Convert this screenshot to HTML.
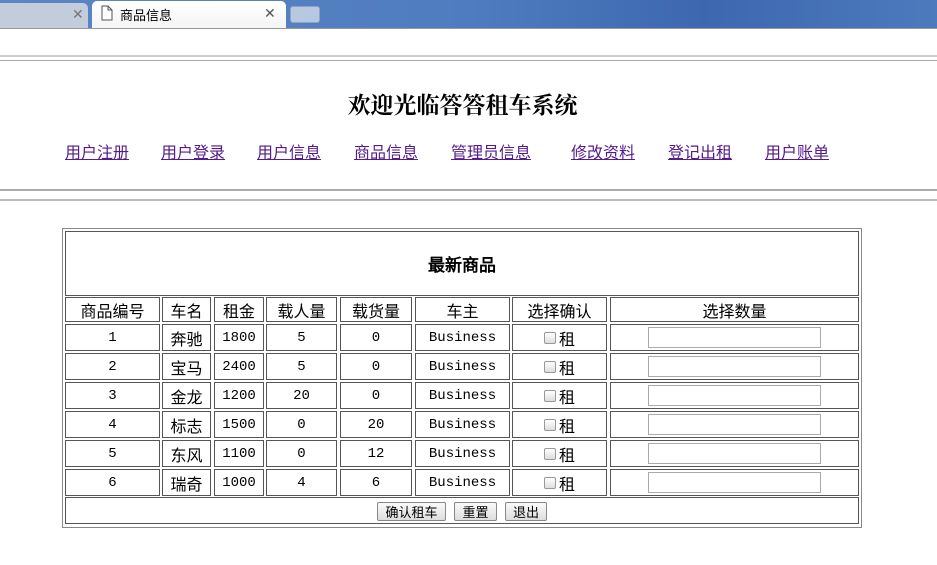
<!DOCTYPE html>
<html><head><meta charset="utf-8"><style>
*{margin:0;padding:0;box-sizing:border-box}
body{width:937px;height:565px;position:relative;background:#fff;overflow:hidden;font-family:"Liberation Serif","Noto Serif CJK SC","Noto Sans CJK SC",serif}
.abs{position:absolute}
.tabbar{left:0;top:0;width:937px;height:28px;background:linear-gradient(90deg,#5b86c4 0%,#4f7cc0 50%,#3d68b0 75%,#4d79bd 100%)}
.r{position:absolute;left:0;width:937px}
.cell{position:absolute;top:0;bottom:0;border:1px solid #555;display:flex;align-items:center;justify-content:center;font-size:16px;color:#000;font-family:"Liberation Serif","WenQuanYi Zen Hei",serif}
.c0{left:65px;width:95px}.c1{left:162px;width:49px}.c2{left:214px;width:50px}.c3{left:266px;width:71px}
.c4{left:340px;width:72px}.c5{left:415px;width:95px}.c6{left:512px;width:95px}.c7{left:610px;width:249px}
.num{font-family:"Liberation Mono","WenQuanYi Zen Hei",monospace;font-size:14px}
a{color:#551a8b;text-decoration:underline;font-size:16px;font-family:"WenQuanYi Zen Hei","Noto Sans CJK SC",sans-serif}
.cb{display:inline-block;width:12px;height:12px;border:1px solid #999;border-radius:2px;background:linear-gradient(#fff,#ddd);margin-right:3px}
.inp{position:absolute;left:648px;top:3px;width:173px;height:21px;border:1px solid #aaa;background:#fff}
.btn{position:absolute;top:502px;height:19px;border:1px solid #888;border-radius:2px;background:linear-gradient(#fafafa,#ddd);font-size:13px;display:flex;align-items:center;justify-content:center;font-family:"WenQuanYi Zen Hei",sans-serif}
</style></head><body>
<div class="abs tabbar"></div>
<div class="abs" style="left:0;top:3px;width:88px;height:25px;background:#c3ccda;border-radius:0 5px 0 0"></div>
<div class="abs" style="left:72px;top:6px;font-size:14px;color:#777;font-family:'Liberation Sans',sans-serif">✕</div>
<div class="abs" style="left:92px;top:1px;width:194px;height:28px;background:linear-gradient(#fff,#f4f4f4);border-radius:5px 5px 0 0"></div>
<svg class="abs" style="left:101px;top:5px" width="12" height="16"><path d="M1 1H7L11 5V15H1Z M7 1V5H11" fill="#fff" stroke="#555" stroke-width="1"/></svg>
<div class="abs" style="left:120px;top:5px;font-size:13px;font-family:'WenQuanYi Zen Hei',sans-serif">商品信息</div>
<div class="abs" style="left:264px;top:5px;font-size:14px;color:#555;font-family:'Liberation Sans',sans-serif">✕</div>
<div class="abs" style="left:290px;top:6px;width:30px;height:17px;background:#b8c8e0;border-radius:3px;border:1px solid #8ea3c6"></div>
<div class="abs" style="left:0;top:28px;width:937px;height:1px;background:#999"></div>
<div class="abs" style="left:0;top:55px;width:937px;height:2px;background:#ccc"></div>
<div class="abs" style="left:0;top:60px;width:937px;height:1px;background:#aaa"></div>

<div class="abs" style="left:0;top:87px;width:925px;text-align:center;font-size:23px;font-weight:bold">欢迎光临答答租车系统</div>
<a class="abs" style="left:65px;top:139px">用户注册</a>
<a class="abs" style="left:161px;top:139px">用户登录</a>
<a class="abs" style="left:257px;top:139px">用户信息</a>
<a class="abs" style="left:354px;top:139px">商品信息</a>
<a class="abs" style="left:451px;top:139px">管理员信息</a>
<a class="abs" style="left:571px;top:139px">修改资料</a>
<a class="abs" style="left:668px;top:139px">登记出租</a>
<a class="abs" style="left:765px;top:139px">用户账单</a>
<div class="abs" style="left:0;top:189px;width:937px;height:2px;background:#aaa"></div>
<div class="abs" style="left:0;top:199px;width:937px;height:2px;background:#bbb"></div>

<div class="abs" style="left:62px;top:228px;width:800px;height:300px;border:1px solid #888"></div>
<div class="cell" style="left:65px;top:231px;width:794px;height:65px;font-weight:bold;font-size:17px">最新商品</div>

<div class="r" style="top:297px;height:25px"><div class="cell c0">商品编号</div><div class="cell c1">车名</div><div class="cell c2">租金</div><div class="cell c3">载人量</div><div class="cell c4">载货量</div><div class="cell c5">车主</div><div class="cell c6">选择确认</div><div class="cell c7">选择数量</div></div>

<div class="r" style="top:324px;height:27px"><div class="cell c0 num">1</div><div class="cell c1">奔驰</div><div class="cell c2 num">1800</div><div class="cell c3 num">5</div><div class="cell c4 num">0</div><div class="cell c5 num">Business</div><div class="cell c6"><span class="cb"></span>租</div><div class="cell c7"></div><div class="inp"></div></div>
<div class="r" style="top:353px;height:27px"><div class="cell c0 num">2</div><div class="cell c1">宝马</div><div class="cell c2 num">2400</div><div class="cell c3 num">5</div><div class="cell c4 num">0</div><div class="cell c5 num">Business</div><div class="cell c6"><span class="cb"></span>租</div><div class="cell c7"></div><div class="inp"></div></div>
<div class="r" style="top:382px;height:27px"><div class="cell c0 num">3</div><div class="cell c1">金龙</div><div class="cell c2 num">1200</div><div class="cell c3 num">20</div><div class="cell c4 num">0</div><div class="cell c5 num">Business</div><div class="cell c6"><span class="cb"></span>租</div><div class="cell c7"></div><div class="inp"></div></div>
<div class="r" style="top:411px;height:27px"><div class="cell c0 num">4</div><div class="cell c1">标志</div><div class="cell c2 num">1500</div><div class="cell c3 num">0</div><div class="cell c4 num">20</div><div class="cell c5 num">Business</div><div class="cell c6"><span class="cb"></span>租</div><div class="cell c7"></div><div class="inp"></div></div>
<div class="r" style="top:440px;height:27px"><div class="cell c0 num">5</div><div class="cell c1">东风</div><div class="cell c2 num">1100</div><div class="cell c3 num">0</div><div class="cell c4 num">12</div><div class="cell c5 num">Business</div><div class="cell c6"><span class="cb"></span>租</div><div class="cell c7"></div><div class="inp"></div></div>
<div class="r" style="top:469px;height:27px"><div class="cell c0 num">6</div><div class="cell c1">瑞奇</div><div class="cell c2 num">1000</div><div class="cell c3 num">4</div><div class="cell c4 num">6</div><div class="cell c5 num">Business</div><div class="cell c6"><span class="cb"></span>租</div><div class="cell c7"></div><div class="inp"></div></div>

<div class="cell" style="left:65px;top:497px;width:794px;height:27px"></div>
<div class="btn" style="left:377px;width:69px">确认租车</div>
<div class="btn" style="left:454px;width:43px">重置</div>
<div class="btn" style="left:505px;width:42px">退出</div>
</body></html>
